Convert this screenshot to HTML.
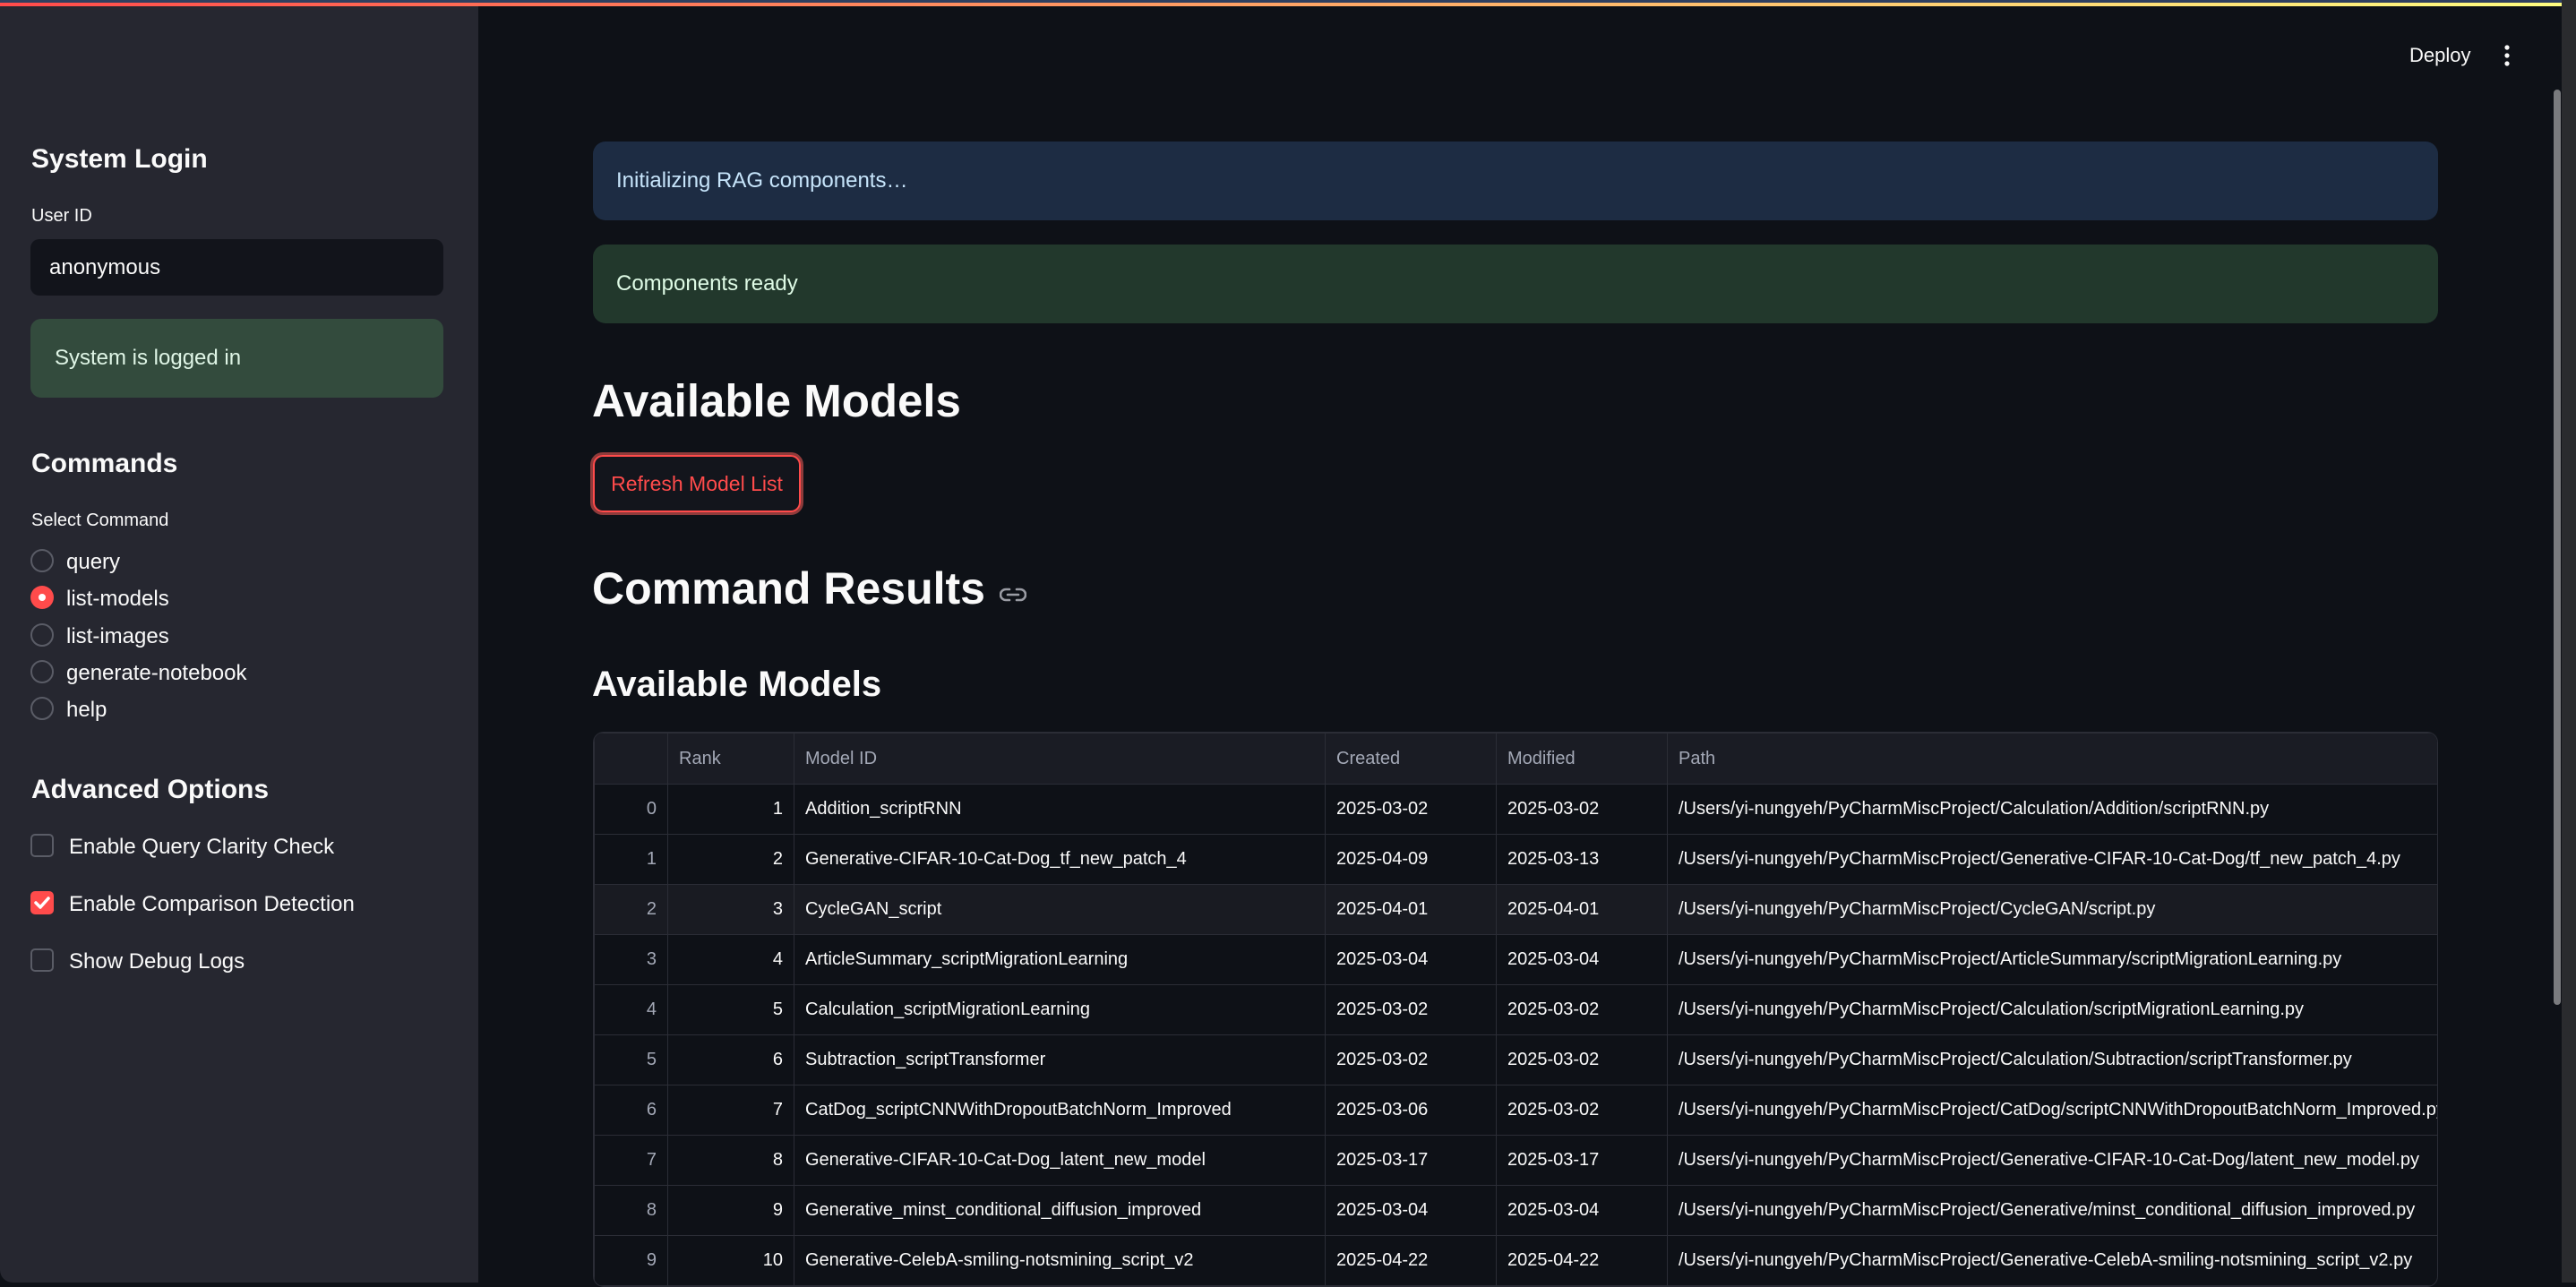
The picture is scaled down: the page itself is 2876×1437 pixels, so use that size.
<!DOCTYPE html>
<html><head><meta charset="utf-8">
<style>
*{box-sizing:border-box;margin:0;padding:0}
html,body{width:2876px;height:1432px;overflow:hidden;background:#0e1117;font-family:"Liberation Sans",sans-serif;color:#fafafa}
.topbar{position:absolute;left:0;top:0;width:2860px;height:3px;background:#2f3f5f}
.grad{position:absolute;left:0;top:3px;width:2860px;height:4px;background:linear-gradient(90deg,#ff4b4b,#fffd80)}
.side{position:absolute;left:0;top:7px;width:534px;height:1425px;background:#262730;border-bottom-left-radius:14px}
.strip{position:absolute;left:2860px;top:0;width:16px;height:1432px;background:#2a2b2e}
.sb{position:absolute;left:2851px;top:100px;width:8px;height:1022px;background:#7a7b7e;border-radius:4px}
.abs{position:absolute;white-space:nowrap}
.h3s{font-size:30px;font-weight:bold;left:35px}
.lbl{font-size:20px;left:35px}
.radio{position:absolute;left:34px;width:26px;height:26px;border:2px solid #5a5c66;border-radius:50%}
.radio.on{border:none;background:#ff4b4b}
.radio.on::after{content:"";position:absolute;left:9px;top:9px;width:8px;height:8px;border-radius:50%;background:#fff}
.rt{font-size:24px;left:74px}
.cb{position:absolute;left:34px;width:26px;height:26px;border:2px solid #5a5c66;border-radius:5px}
.cb.on{border:none;background:#ff4b4b}
.ct{font-size:24px;left:77px}
.box{position:absolute;left:662px;width:2060px;height:88px;border-radius:14px;font-size:24px;padding-left:26px;line-height:88px}
.tw{position:absolute;left:662px;top:817px;width:2060px;height:620px;overflow:hidden;border:1px solid #2b2d36;border-radius:12px}
table{position:absolute;left:0;top:0;width:2068px;border-collapse:collapse;font-family:"Liberation Sans",sans-serif;font-size:20px;table-layout:fixed}
td,th{height:56px;border:1px solid #2b2d36;padding:0 12px;white-space:nowrap;overflow:hidden;font-weight:normal;text-align:left}
th{height:57px;background:#1a1c24;color:#a3a8b6}
td.i{color:#a3a8b6;text-align:right}
td.r{text-align:right}
tr.alt td{background:#191b22}
</style></head><body>
<div class="topbar"></div><div class="grad"></div>
<div class="side"></div>
<div class="abs h3s" style="top:161px">System Login</div>
<div class="abs lbl" style="top:230px">User ID</div>
<div class="abs" style="left:34px;top:267px;width:461px;height:63px;background:#12141b;border-radius:10px;font-size:24px;padding-left:21px;line-height:63px">anonymous</div>
<div class="abs" style="left:34px;top:356px;width:461px;height:88px;background:#334b3d;border-radius:12px;font-size:24px;padding-left:27px;line-height:88px;color:#dff5e6">System is logged in</div>
<div class="abs h3s" style="top:501px">Commands</div>
<div class="abs lbl" style="top:570px">Select Command</div>
<div class="radio" style="top:613px"></div><div class="abs rt" style="top:614px">query</div>
<div class="radio on" style="top:654px"></div><div class="abs rt" style="top:655px">list-models</div>
<div class="radio" style="top:696px"></div><div class="abs rt" style="top:697px">list-images</div>
<div class="radio" style="top:737px"></div><div class="abs rt" style="top:738px">generate-notebook</div>
<div class="radio" style="top:778px"></div><div class="abs rt" style="top:779px">help</div>
<div class="abs h3s" style="top:865px">Advanced Options</div>
<div class="cb" style="top:931px"></div><div class="abs ct" style="top:932px">Enable Query Clarity Check</div>
<div class="cb on" style="top:995px"><svg width="26" height="26" viewBox="0 0 26 26"><path d="M6 13l5 5 9-10" stroke="#fff" stroke-width="3.5" fill="none" stroke-linecap="round" stroke-linejoin="round"/></svg></div><div class="abs ct" style="top:996px">Enable Comparison Detection</div>
<div class="cb" style="top:1059px"></div><div class="abs ct" style="top:1060px">Show Debug Logs</div>

<div class="abs" style="left:2690px;top:49px;font-size:22px">Deploy</div>
<svg class="abs" style="left:2792px;top:50px" width="14" height="24"><circle cx="7" cy="3" r="2.6" fill="#fafafa"/><circle cx="7" cy="12" r="2.6" fill="#fafafa"/><circle cx="7" cy="21" r="2.6" fill="#fafafa"/></svg>

<div class="box" style="top:158px;background:#1d2c43;color:#c7e5fb">Initializing RAG components…</div>
<div class="box" style="top:273px;background:#22382c;color:#dffbe6">Components ready</div>
<div class="abs" style="left:661px;top:418px;font-size:51px;font-weight:bold">Available Models</div>
<div class="abs" style="left:659px;top:505px;width:238px;height:70px;border:3px solid #8f3b3b;border-radius:14px"></div>
<div class="abs" style="left:662px;top:508px;width:232px;height:64px;border:2px solid #ff4b4b;border-radius:11px;background:#13151c;color:#ff4b4b;font-size:23px;line-height:60px;text-align:center">Refresh Model List</div>
<div class="abs" style="left:661px;top:628px;font-size:50px;font-weight:bold">Command Results</div>
<svg class="abs" style="left:1116px;top:656px" width="30" height="16" viewBox="0 0 30 16"><path d="M11 2H7a6 6 0 000 12h4M19 2h4a6 6 0 010 12h-4M9 8h12" stroke="#9a9ca4" stroke-width="2.6" fill="none" stroke-linecap="round"/></svg>
<div class="abs" style="left:661px;top:742px;font-size:40px;font-weight:bold">Available Models</div>

<div class="tw"><table>
<colgroup><col style="width:82px"><col style="width:141px"><col style="width:593px"><col style="width:191px"><col style="width:191px"><col style="width:870px"></colgroup>
<tr><th></th><th>Rank</th><th>Model ID</th><th>Created</th><th>Modified</th><th>Path</th></tr>
<tr><td class="i">0</td><td class="r">1</td><td>Addition_scriptRNN</td><td>2025-03-02</td><td>2025-03-02</td><td>/Users/yi-nungyeh/PyCharmMiscProject/Calculation/Addition/scriptRNN.py</td></tr>
<tr><td class="i">1</td><td class="r">2</td><td>Generative-CIFAR-10-Cat-Dog_tf_new_patch_4</td><td>2025-04-09</td><td>2025-03-13</td><td>/Users/yi-nungyeh/PyCharmMiscProject/Generative-CIFAR-10-Cat-Dog/tf_new_patch_4.py</td></tr>
<tr class="alt"><td class="i">2</td><td class="r">3</td><td>CycleGAN_script</td><td>2025-04-01</td><td>2025-04-01</td><td>/Users/yi-nungyeh/PyCharmMiscProject/CycleGAN/script.py</td></tr>
<tr><td class="i">3</td><td class="r">4</td><td>ArticleSummary_scriptMigrationLearning</td><td>2025-03-04</td><td>2025-03-04</td><td>/Users/yi-nungyeh/PyCharmMiscProject/ArticleSummary/scriptMigrationLearning.py</td></tr>
<tr><td class="i">4</td><td class="r">5</td><td>Calculation_scriptMigrationLearning</td><td>2025-03-02</td><td>2025-03-02</td><td>/Users/yi-nungyeh/PyCharmMiscProject/Calculation/scriptMigrationLearning.py</td></tr>
<tr><td class="i">5</td><td class="r">6</td><td>Subtraction_scriptTransformer</td><td>2025-03-02</td><td>2025-03-02</td><td>/Users/yi-nungyeh/PyCharmMiscProject/Calculation/Subtraction/scriptTransformer.py</td></tr>
<tr><td class="i">6</td><td class="r">7</td><td>CatDog_scriptCNNWithDropoutBatchNorm_Improved</td><td>2025-03-06</td><td>2025-03-02</td><td>/Users/yi-nungyeh/PyCharmMiscProject/CatDog/scriptCNNWithDropoutBatchNorm_Improved.py</td></tr>
<tr><td class="i">7</td><td class="r">8</td><td>Generative-CIFAR-10-Cat-Dog_latent_new_model</td><td>2025-03-17</td><td>2025-03-17</td><td>/Users/yi-nungyeh/PyCharmMiscProject/Generative-CIFAR-10-Cat-Dog/latent_new_model.py</td></tr>
<tr><td class="i">8</td><td class="r">9</td><td>Generative_minst_conditional_diffusion_improved</td><td>2025-03-04</td><td>2025-03-04</td><td>/Users/yi-nungyeh/PyCharmMiscProject/Generative/minst_conditional_diffusion_improved.py</td></tr>
<tr><td class="i">9</td><td class="r">10</td><td>Generative-CelebA-smiling-notsmining_script_v2</td><td>2025-04-22</td><td>2025-04-22</td><td>/Users/yi-nungyeh/PyCharmMiscProject/Generative-CelebA-smiling-notsmining_script_v2.py</td></tr>
</table></div>

<div class="strip"></div>
<div class="sb"></div>
</body></html>
